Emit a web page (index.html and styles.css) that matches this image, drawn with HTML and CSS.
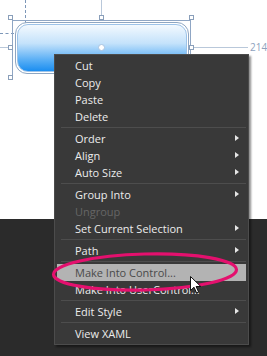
FILE: index.html
```html
<!DOCTYPE html>
<html>
  <head>
    <title>context menu</title>
    <link rel="stylesheet" href="styles.css">
  </head>
  <body>
    <div class="canvas">
      <div class="guide guide-v"></div>
      <div class="guide guide-h"></div>
      <div class="rule rule-top"></div>
      <div class="rule rule-left"></div>
      <div class="rule rule-right"></div>
      <span class="measure">214</span>

      <div class="sel-top"></div>
      <div class="sel-left"></div>
      <div class="sel-right"></div>

      <div class="button"><div class="button-face"></div></div>
      <div class="pivot"></div>

      <div class="handle h-tl"></div>
      <div class="handle h-tc"></div>
      <div class="handle h-tr"></div>
      <div class="handle h-ml"></div>
      <div class="handle h-mr"></div>
      <div class="handle h-bl"></div>
    </div>
    <div class="dock"></div>

    <ul class="menu">
      <li class="item">Cut</li>
      <li class="item">Copy</li>
      <li class="item">Paste</li>
      <li class="item">Delete</li>
      <li class="sep"></li>
      <li class="item sub">Order</li>
      <li class="item sub">Align</li>
      <li class="item sub">Auto Size</li>
      <li class="sep"></li>
      <li class="item sub">Group Into</li>
      <li class="item off">Ungroup</li>
      <li class="item sub">Set Current Selection</li>
      <li class="sep"></li>
      <li class="item sub">Path</li>
      <li class="sep"></li>
      <li class="item hot">Make Into Control...</li>
      <li class="item">Make Into UserControl...</li>
      <li class="sep"></li>
      <li class="item sub">Edit Style</li>
      <li class="sep"></li>
      <li class="item">View XAML</li>
    </ul>

    <svg class="mark" width="267" height="356" viewBox="0 0 267 356">
      <ellipse cx="145" cy="272" rx="91.5" ry="18" transform="rotate(-1.5 145 272)" fill="none" stroke="#e4106e" stroke-width="3.2"/>
    </svg>
    <svg class="cursor" width="12" height="18" viewBox="0 0 12 18">
      <path d="M0.5 0.5 L0.5 14.5 L4 11.2 L6.6 17 L8.6 16.1 L6.1 10.5 L10.8 10.5 Z" fill="#fff" stroke="#111" stroke-width="1"/>
    </svg>
  </body>
</html>
```

FILE: styles.css
```css
body {
  margin: 0;
  width: 267px;
  height: 356px;
  overflow: hidden;
  position: relative;
  display: flex;
  flex-direction: column;
  background: #2b2b2b;
  font-family: "Open Sans", "DejaVu Sans", sans-serif;
}
.canvas {
  height: 219px;
  background: #fff;
  position: relative;
  flex: none;
}
.dock {
  flex: 1;
  background: #2b2b2b;
}

/* design surface adorners */
.guide-v {
  position: absolute;
  left: 25px;
  top: 0;
  height: 33px;
  border-left: 1px dashed #7d97b8;
}
.guide-h {
  position: absolute;
  left: 0;
  top: 33px;
  width: 25px;
  border-top: 1px dashed #7d97b8;
}
.rule {
  position: absolute;
  background: #b9c8da;
}
.rule-top {
  left: 101px;
  top: 0;
  width: 1px;
  height: 15px;
}
.rule-left {
  left: 0;
  top: 47px;
  width: 8px;
  height: 1px;
}
.rule-right {
  left: 194px;
  top: 47px;
  width: 54px;
  height: 1px;
}
.measure {
  position: absolute;
  left: 250px;
  top: 40px;
  font-size: 10px;
  line-height: 14px;
  color: #8ea2bd;
}
.sel-top, .sel-left, .sel-right {
  position: absolute;
  background: #8fa6c4;
}
.sel-top {
  left: 12px;
  top: 20px;
  width: 179px;
  height: 1px;
}
.sel-left {
  left: 12px;
  top: 20px;
  width: 1px;
  height: 60px;
}
.sel-right {
  left: 190px;
  top: 17px;
  width: 1px;
  height: 60px;
}
.button {
  position: absolute;
  left: 15px;
  top: 22px;
  width: 170px;
  height: 48px;
  border: 1px solid #8ea6c2;
  border-radius: 12px;
  padding: 1px;
  background: #fff;
}
.button-face {
  height: 100%;
  border-radius: 11px;
  border: 1px solid #9dc3e8;
  box-sizing: border-box;
  background: linear-gradient(#f3f9fe, #c4e2fb 40%, #5cb0f5 75%, #1b8ef0);
}
.pivot {
  position: absolute;
  left: 98px;
  top: 44px;
  width: 5px;
  height: 5px;
  border-radius: 50%;
  background: #fff;
  border: 1px solid #a9c3e0;
}
.handle {
  position: absolute;
  width: 3px;
  height: 3px;
  background: #fff;
  border: 1px solid #8a9fba;
}
.h-tl { left: 8px; top: 15px; }
.h-tc { left: 99px; top: 15px; }
.h-tr { left: 189px; top: 15px; }
.h-ml { left: 8px; top: 45px; }
.h-mr { left: 189px; top: 45px; }
.h-bl { left: 8px; top: 75px; }

/* context menu */
.menu {
  position: absolute;
  left: 54px;
  top: 54px;
  width: 193px;
  margin: 0;
  padding: 2px 0;
  list-style: none;
  background: #393939;
  border: 1px solid #4c4c4c;
  box-shadow: 2px 2px 2px rgba(0, 0, 0, 0.45);
}
.item {
  position: relative;
  height: 17px;
  line-height: 17px;
  margin: 0 2px;
  padding-left: 18px;
  font-size: 11px;
  color: #ececec;
  white-space: nowrap;
}
.item.off {
  color: #666;
}
.item.hot {
  background: #b3b3b3;
  color: #4a4a4a;
}
.item.sub::after {
  content: "";
  position: absolute;
  right: 7px;
  top: 5px;
  border-left: 4px solid #e6e6e6;
  border-top: 3.5px solid transparent;
  border-bottom: 3.5px solid transparent;
}
.sep {
  height: 1px;
  margin: 2px 2px 2px 6px;
  background: #4d4d4d;
}

.mark {
  position: absolute;
  left: 0;
  top: 0;
}
.cursor {
  position: absolute;
  left: 190px;
  top: 276px;
}
```
